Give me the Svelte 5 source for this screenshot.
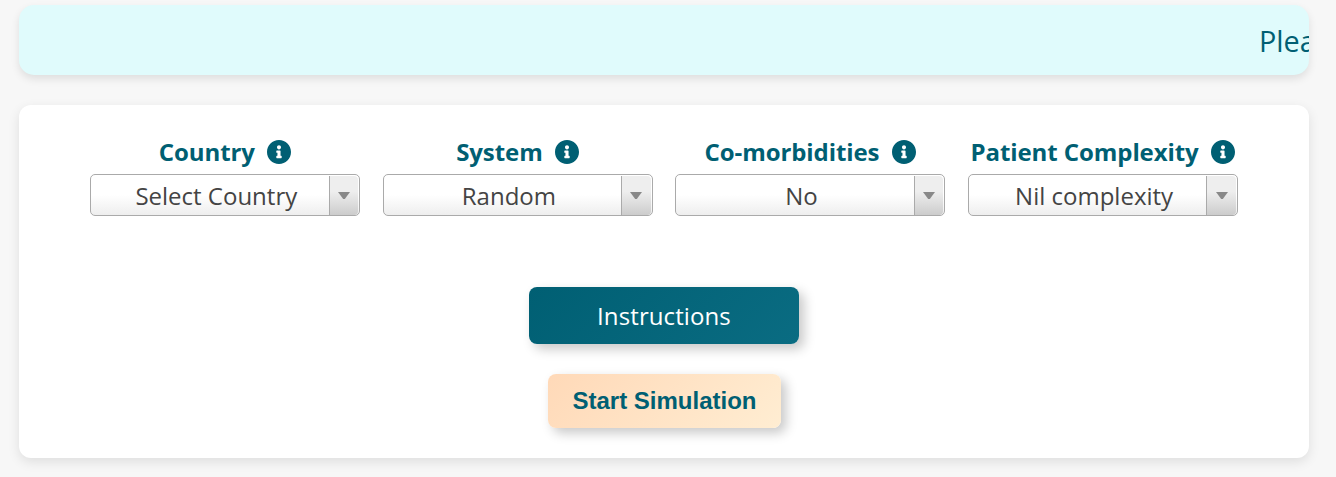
<script>
  const fields = [
    { label: 'Country', value: 'Select Country' },
    { label: 'System', value: 'Random' },
    { label: 'Co-morbidities', value: 'No' },
    { label: 'Patient Complexity', value: 'Nil complexity' }
  ];
</script>

<main>
  <div class="banner"><span>Please</span></div>

  <section class="card">
    <div class="fields">
      {#each fields as field}
        <div class="field">
          <div class="label">
            <span>{field.label}</span>
            <svg viewBox="8 8 496 496" aria-hidden="true">
              <path d="M256 8C119.043 8 8 119.083 8 256c0 136.997 111.043 248 248 248s248-111.003 248-248C504 119.083 392.957 8 256 8zm0 110c23.196 0 42 18.804 42 42s-18.804 42-42 42-42-18.804-42-42 18.804-42 42-42zm56 254c0 6.627-5.373 12-12 12h-88c-6.627 0-12-5.373-12-12v-24c0-6.627 5.373-12 12-12h12v-64h-12c-6.627 0-12-5.373-12-12v-24c0-6.627 5.373-12 12-12h64c6.627 0 12 5.373 12 12v100h12c6.627 0 12 5.373 12 12v24z" />
            </svg>
          </div>
          <div class="select">
            <span class="value">{field.value}</span>
            <span class="arrow">
              <svg viewBox="0 0 12 7" aria-hidden="true"><path d="M0 0h12L6.8 7H5.2z" /></svg>
            </span>
          </div>
        </div>
      {/each}
    </div>

    <button class="instructions">Instructions</button>
    <button class="start">Start Simulation</button>
  </section>
</main>

<style>
  :global(body) {
    margin: 0;
    background: #f7f7f7;
  }
  main {
    box-sizing: border-box;
    height: 477px;
    padding: 5px 27px 0 19px;
    overflow: hidden;
    font-family: 'Open Sans', sans-serif;
    color: #005f73;
  }
  .banner {
    height: 70px;
    overflow: hidden;
    border-radius: 15px;
    background: #e0fbfc;
    box-shadow: 0 4px 8px rgba(0, 0, 0, 0.1);
    font-size: 28.8px;
    line-height: 72px;
    white-space: nowrap;
  }
  .banner span {
    display: block;
    margin-left: 1240px;
  }
  .card {
    box-sizing: border-box;
    display: flex;
    flex-direction: column;
    align-items: center;
    height: 353px;
    margin-top: 30px;
    padding-top: 30px;
    border-radius: 12px;
    background: #fff;
    box-shadow: 0 4px 12px rgba(0, 0, 0, 0.1);
  }
  .fields {
    display: flex;
    gap: 22.6px;
  }
  .field {
    width: 270px;
  }
  .label {
    display: flex;
    align-items: center;
    justify-content: center;
    gap: 12.6px;
    height: 34px;
    font-size: 24px;
    font-weight: 700;
    letter-spacing: -0.08px;
    line-height: 34px;
    white-space: nowrap;
  }
  .label svg {
    flex: none;
    width: 24px;
    height: 24px;
    fill: currentColor;
  }
  .select {
    box-sizing: border-box;
    display: flex;
    height: 42px;
    margin-top: 5px;
    overflow: hidden;
    border: 1px solid #aaa;
    border-radius: 5px;
    background: linear-gradient(to top, #eee 0%, #fff 50%);
    color: #444;
    font-size: 24px;
    line-height: 41px;
  }
  .value {
    flex: 1;
    padding-left: 13px;
    text-align: center;
  }
  .arrow {
    box-sizing: border-box;
    display: flex;
    justify-content: center;
    width: 29.6px;
    margin: 1px 1px 0 0;
    border-left: 1px solid #aaa;
    border-radius: 0 4px 4px 0;
    background: linear-gradient(to top, #ccc 0%, #eee 60%);
  }
  .arrow svg {
    width: 12px;
    height: 7px;
    margin-top: 16px;
    fill: #888;
  }
  button {
    border: 0;
    border-radius: 8px;
    font-size: 24px;
    box-shadow: 5px 5px 12px rgba(0, 0, 0, 0.22);
  }
  .instructions {
    width: 270px;
    height: 57px;
    margin-top: 71px;
    padding: 0;
    background: linear-gradient(135deg, #005f73, #0a6c82);
    color: #fff;
    font-family: 'Open Sans', sans-serif;
    letter-spacing: 0.1px;
  }
  .start {
    width: 233px;
    height: 54px;
    margin-top: 30px;
    padding: 0 0 0 1px;
    background: linear-gradient(135deg, #ffd9b8, #ffedd2);
    color: #005f73;
    font-family: 'Liberation Sans', Arial, sans-serif;
    font-weight: 700;
  }
</style>
